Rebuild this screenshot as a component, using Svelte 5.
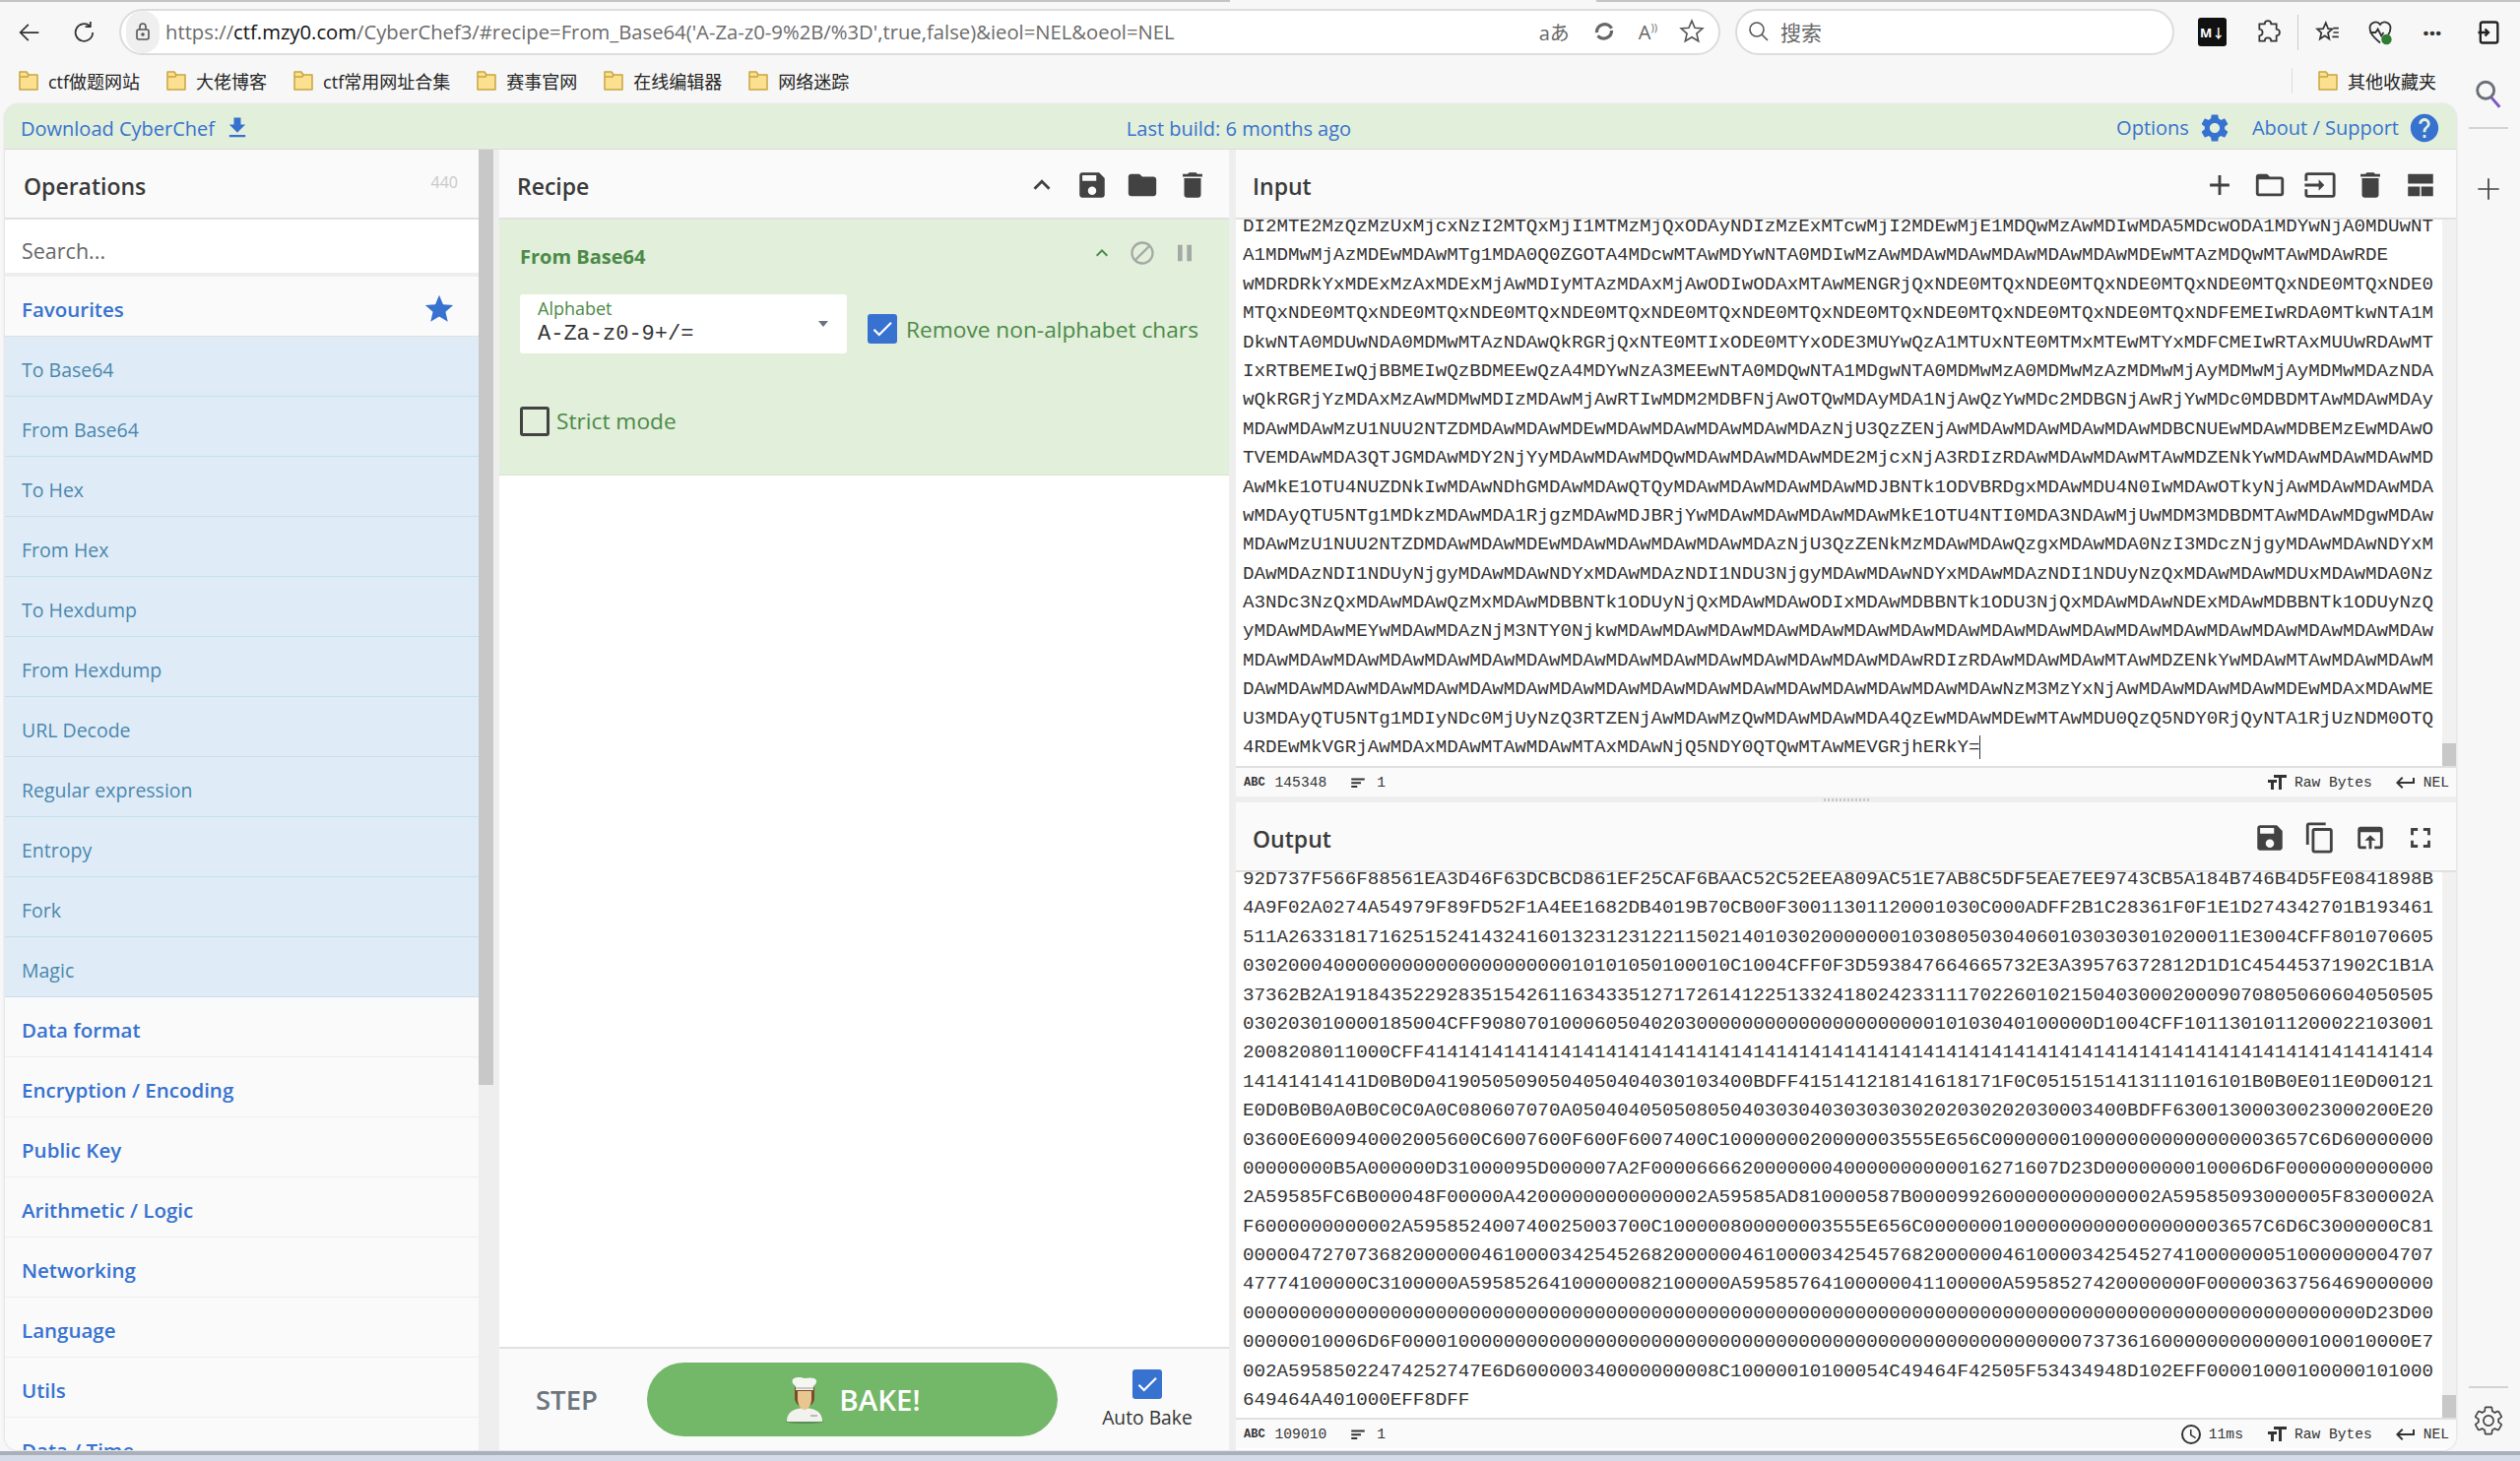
<script>
	const bookmarks = ["ctf做题网站", "大佬博客", "ctf常用网址合集", "赛事官网", "在线编辑器", "网络迷踪"];
	const favourites = ["To Base64", "From Base64", "To Hex", "From Hex", "To Hexdump", "From Hexdump", "URL Decode", "Regular expression", "Entropy", "Fork", "Magic"];
	const categories = ["Data format", "Encryption / Encoding", "Public Key", "Arithmetic / Logic", "Networking", "Language", "Utils", "Data / Time"];

	// the text area wraps at 105 characters, drop spare zeros from my transcription
	const fit = (line) => {
		while (line.length > 105) line = line.replace("000000", "00000");
		return line;
	};

	const input = [
		"DI2MTE2MzQzMzUxMjcxNzI2MTQxMjI1MTMzMjQxODAyNDIzMzExMTcwMjI2MDEwMjE1MDQwMzAwMDIwMDA5MDcwODA1MDYwNjA0MDUwNT",
		"A1MDMwMjAzMDEwMDAwMTg1MDA0Q0ZGOTA4MDcwMTAwMDYwNTA0MDIwMzAwMDAwMDAwMDAwMDAwMDAwMDEwMTAzMDQwMTAwMDAwRDE",
		"wMDRDRkYxMDExMzAxMDExMjAwMDIyMTAzMDAxMjAwODIwODAxMTAwMENGRjQxNDE0MTQxNDE0MTQxNDE0MTQxNDE0MTQxNDE0MTQxNDE0",
		"MTQxNDE0MTQxNDE0MTQxNDE0MTQxNDE0MTQxNDE0MTQxNDE0MTQxNDE0MTQxNDE0MTQxNDE0MTQxNDE0MTQxNDFEMEIwRDA0MTkwNTA1M",
		"DkwNTA0MDUwNDA0MDMwMTAzNDAwQkRGRjQxNTE0MTIxODE0MTYxODE3MUYwQzA1MTUxNTE0MTMxMTEwMTYxMDFCMEIwRTAxMUUwRDAwMT",
		"IxRTBEMEIwQjBBMEIwQzBDMEEwQzA4MDYwNzA3MEEwNTA0MDQwNTA1MDgwNTA0MDMwMzA0MDMwMzAzMDMwMjAyMDMwMjAyMDMwMDAzNDA",
		"wQkRGRjYzMDAxMzAwMDMwMDIzMDAwMjAwRTIwMDM2MDBFNjAwOTQwMDAyMDA1NjAwQzYwMDc2MDBGNjAwRjYwMDc0MDBDMTAwMDAwMDAy",
		"MDAwMDAwMzU1NUU2NTZDMDAwMDAwMDEwMDAwMDAwMDAwMDAwMDAzNjU3QzZENjAwMDAwMDAwMDAwMDAwMDBCNUEwMDAwMDBEMzEwMDAwO",
		"TVEMDAwMDA3QTJGMDAwMDY2NjYyMDAwMDAwMDQwMDAwMDAwMDAwMDE2MjcxNjA3RDIzRDAwMDAwMDAwMTAwMDZENkYwMDAwMDAwMDAwMD",
		"AwMkE1OTU4NUZDNkIwMDAwNDhGMDAwMDAwQTQyMDAwMDAwMDAwMDAwMDJBNTk1ODVBRDgxMDAwMDU4N0IwMDAwOTkyNjAwMDAwMDAwMDA",
		"wMDAyQTU5NTg1MDkzMDAwMDA1RjgzMDAwMDJBRjYwMDAwMDAwMDAwMDAwMkE1OTU4NTI0MDA3NDAwMjUwMDM3MDBDMTAwMDAwMDgwMDAw",
		"MDAwMzU1NUU2NTZDMDAwMDAwMDEwMDAwMDAwMDAwMDAwMDAzNjU3QzZENkMzMDAwMDAwQzgxMDAwMDA0NzI3MDczNjgyMDAwMDAwNDYxM",
		"DAwMDAzNDI1NDUyNjgyMDAwMDAwNDYxMDAwMDAzNDI1NDU3NjgyMDAwMDAwNDYxMDAwMDAzNDI1NDUyNzQxMDAwMDAwMDUxMDAwMDA0Nz",
		"A3NDc3NzQxMDAwMDAwQzMxMDAwMDBBNTk1ODUyNjQxMDAwMDAwODIxMDAwMDBBNTk1ODU3NjQxMDAwMDAwNDExMDAwMDBBNTk1ODUyNzQ",
		"yMDAwMDAwMEYwMDAwMDAzNjM3NTY0NjkwMDAwMDAwMDAwMDAwMDAwMDAwMDAwMDAwMDAwMDAwMDAwMDAwMDAwMDAwMDAwMDAwMDAwMDAw",
		"MDAwMDAwMDAwMDAwMDAwMDAwMDAwMDAwMDAwMDAwMDAwMDAwMDAwMDAwMDAwRDIzRDAwMDAwMDAwMTAwMDZENkYwMDAwMTAwMDAwMDAwM",
		"DAwMDAwMDAwMDAwMDAwMDAwMDAwMDAwMDAwMDAwMDAwMDAwMDAwMDAwMDAwMDAwMDAwNzM3MzYxNjAwMDAwMDAwMDAwMDEwMDAxMDAwME",
		"U3MDAyQTU5NTg1MDIyNDc0MjUyNzQ3RTZENjAwMDAwMzQwMDAwMDAwMDA4QzEwMDAwMDEwMTAwMDU0QzQ5NDY0RjQyNTA1RjUzNDM0OTQ",
		"4RDEwMkVGRjAwMDAxMDAwMTAwMDAwMTAxMDAwNjQ5NDY0QTQwMTAwMEVGRjhERkY="
	];
	const output = [
		"92D737F566F88561EA3D46F63DCBCD861EF25CAF6BAAC52C52EEA809AC51E7AB8C5DF5EAE7EE9743CB5A184B746B4D5FE0841898B",
		"4A9F02A0274A54979F89FD52F1A4EE1682DB4019B70CB00F30011301120001030C000ADFF2B1C28361F0F1E1D274342701B193461",
		"511A263318171625152414324160132312312211502140103020000000103080503040601030303010200011E3004CFF801070605",
		"0302000400000000000000000000010101050100010C1004CFF0F3D593847664665732E3A39576372812D1D1C45445371902C1B1A",
		"37362B2A1918435229283515426116343351271726141225133241802423311170226010215040300020009070805060604050505",
		"030203010000185004CFF9080701000605040203000000000000000000000010103040100000D1004CFF1011301011200022103001",
		"2008208011000CFF" + "41".repeat(44) + "4",
		"14141414141D0B0D04190505090504050404030103400BDFF415141218141618171F0C0515151413111016101B0B0E011E0D00121",
		"E0D0B0B0A0B0C0C0A0C080607070A0504040505080504030304030303030202030202030003400BDFF63001300030023000200E20",
		"03600E600940002005600C6007600F600F6007400C1000000020000003555E656C0000000100000000000000003657C6D60000000",
		"00000000B5A000000D31000095D000007A2F00006666200000004000000000001627160 7D23D0000000010006D6F0000000000000".replace(" ", ""),
		"2A59585FC6B000048F000000A42000000000000002A59585AD810000587B0000992600000000000002A59585093000005F8300002A",
		"F600000000000002A595852400740025003700C100000800000003555E656C000000010000000000000000003657C6D6C3000000C81",
		"000004727073682000000461000034254526820000004610000342545768200000046100003425452741000000051000000004707",
		"477741000000C3100000A59585264100000082100000A59585764100000041100000A5958527420000000F00000363756469000000",
		"000000000000000000000000000000000000000000000000000000000000000000000000000000000000000000000000000D23D00",
		"00000010006D6F00001000000000000000000000000000000000000000000000000000000073736160000000000000100010000E7",
		"002A59585022474252747E6D600000340000000008C10000010100054C49464F42505F53434948D102EFF00001000100000101000",
		"649464A401000EFF8DFF"
	].map(fit);

	const paths = {
		up: "M7.41 15.41L12 10.83l4.59 4.58L18 14l-6-6-6 6z",
		save: "M17 3H5c-1.11 0-2 .9-2 2v14c0 1.1.89 2 2 2h14c1.1 0 2-.9 2-2V7l-4-4zm-5 16c-1.66 0-3-1.34-3-3s1.34-3 3-3 3 1.34 3 3-1.34 3-3 3zm3-10H5V5h10v4z",
		folder: "M10 4H4c-1.1 0-1.99.9-1.99 2L2 18c0 1.1.9 2 2 2h16c1.1 0 2-.9 2-2V8c0-1.1-.9-2-2-2h-8l-2-2z",
		folderOpen: "M20 6h-8l-2-2H4c-1.1 0-1.99.9-1.99 2L2 18c0 1.1.9 2 2 2h16c1.1 0 2-.9 2-2V8c0-1.1-.9-2-2-2zm0 12H4V8h16v10z",
		trash: "M6 19c0 1.1.9 2 2 2h8c1.1 0 2-.9 2-2V7H6v12zM19 4h-3.5l-1-1h-5l-1 1H5v2h14V4z",
		add: "M19 13h-6v6h-2v-6H5v-2h6V5h2v6h6v2z",
		input: "M21 3.01H3c-1.1 0-2 .9-2 2V9h2V4.99h18v14.03H3V15H1v4.01c0 1.1.9 1.98 2 1.98h18c1.1 0 2-.88 2-1.98v-14c0-1.11-.9-2-2-2zM11 16l4-4-4-4v3H1v2h10v3z",
		split: "M3 4h18v7H3zM3 13h8.500v7H3zM12.500 13H21v7h-8.500z",
		copy: "M16 1H4c-1.1 0-2 .9-2 2v14h2V3h12V1zm3 4H8c-1.1 0-2 .9-2 2v14c0 1.1.9 2 2 2h11c1.1 0 2-.9 2-2V7c0-1.1-.9-2-2-2zm0 16H8V7h11v14z",
		openIn: "M19 4H5c-1.11 0-2 .9-2 2v12c0 1.1.89 2 2 2h4v-2H5V8h14v10h-4v2h4c1.1 0 2-.9 2-2V6c0-1.1-.89-2-2-2zm-7 6l-4 4h3v6h2v-6h3l-4-4z",
		fullscreen: "M7 14H5v5h5v-2H7v-3zm-2-4h2V7h3V5H5v5zm12 7h-3v2h5v-5h-2v3zM14 5v2h3v3h2V5h-5z",
		gear: "M19.14 12.94c.04-.3.06-.61.06-.94 0-.32-.02-.64-.07-.94l2.03-1.58c.18-.14.23-.41.12-.61l-1.92-3.32c-.12-.22-.37-.29-.59-.22l-2.39.96c-.5-.38-1.03-.7-1.62-.94l-.36-2.54c-.04-.24-.24-.41-.48-.41h-3.84c-.24 0-.43.17-.47.41l-.36 2.54c-.59.24-1.13.57-1.62.94l-2.39-.96c-.22-.08-.47 0-.59.22L2.74 8.87c-.12.21-.08.47.12.61l2.03 1.58c-.05.3-.09.63-.09.94s.02.64.07.94l-2.03 1.58c-.18.14-.23.41-.12.61l1.92 3.32c.12.22.37.29.59.22l2.39-.96c.5.38 1.03.7 1.62.94l.36 2.54c.05.24.24.41.48.41h3.84c.24 0 .44-.17.47-.41l.36-2.54c.59-.24 1.13-.56 1.62-.94l2.39.96c.22.08.47 0 .59-.22l1.92-3.32c.12-.22.07-.47-.12-.61l-2.01-1.58zM12 15.6c-1.98 0-3.6-1.62-3.6-3.6s1.62-3.6 3.6-3.6 3.6 1.62 3.6 3.6-1.62 3.6-3.6 3.6z",
		help: "M12 2C6.48 2 2 6.48 2 12s4.48 10 10 10 10-4.48 10-10S17.52 2 12 2zm1 17h-2v-2h2v2zm2.07-7.75l-.9.92C13.45 12.9 13 13.5 13 15h-2v-.5c0-1.1.45-2.1 1.17-2.83l1.24-1.26c.37-.36.59-.86.59-1.41 0-1.1-.9-2-2-2s-2 .9-2 2H8c0-2.21 1.79-4 4-4s4 1.79 4 4c0 .88-.36 1.68-.93 2.25z",
		download: "M19 9h-4V3H9v6H5l7 7 7-7zM5 18v2h14v-2H5z",
		star: "M12 17.27L18.18 21l-1.64-7.03L22 9.24l-7.19-.61L12 2 9.19 8.63 2 9.24l5.46 4.73L5.82 21z",
		block: "M12 2C6.48 2 2 6.48 2 12s4.48 10 10 10 10-4.48 10-10S17.52 2 12 2zM4 12c0-4.42 3.58-8 8-8 1.85 0 3.55.63 4.9 1.69L5.69 16.9C4.63 15.55 4 13.85 4 12zm8 8c-1.85 0-3.55-.63-4.9-1.69L18.31 7.1C19.37 8.45 20 10.15 20 12c0 4.42-3.58 8-8 8z",
		pause: "M6 19h4V5H6v14zm8-14v14h4V5h-4z",
		check: "M9 16.17L4.83 12l-1.42 1.41L9 19 21 7l-1.41-1.41z",
		caret: "M7 9l5 6 5-6z",
		clock: "M12 2a10 10 0 1 0 0 20 10 10 0 0 0 0-20zm0 18a8 8 0 1 1 0-16 8 8 0 0 1 0 16zm.5-13H11v6l5.250 3.150.750-1.230-4.500-2.670z",
		textSize: "M9 4v3h5v12h3V7h5V4H9zm-6 8h3v7h3v-7h3V9H3v3z",
		lines: "M3 6h18v2.500H3zM3 11h13v2.500H3zM3 16h8v2.500H3z",
		newline: "M19 7v4H5.830l3.580-3.590L8 6l-6 6 6 6 1.410-1.410L5.830 13H21V7z"
	};
</script>

{#snippet icon(name, size, color)}
	<svg width={size} height={size} viewBox="0 0 24 24" fill={color} aria-hidden="true"><path d={paths[name]} /></svg>
{/snippet}

{#snippet folderIcon()}
	<svg width="24" height="24" viewBox="0 0 24 24" aria-hidden="true">
		<path d="M3 3h7l2 3h9v15H3z" fill="#fbe08f" stroke="#c9a542" stroke-width="1.500" stroke-linejoin="round" />
		<path d="M3 8h8l1-2" fill="none" stroke="#c9a542" stroke-width="1.500" />
	</svg>
{/snippet}

{#snippet statusLeft(length)}
	<span class="abc">ABC</span>
	<span>{length}</span>
	<span class="lines">{@render icon("lines", 18, "#333")}</span>
	<span>1</span>
{/snippet}

{#snippet statusRight()}
	<span class="stat">{@render icon("textSize", 24, "#333")} Raw Bytes</span>
	<span class="stat">{@render icon("newline", 24, "#333")} NEL</span>
{/snippet}

<div class="page">
	<div class="tabstrip"><i></i><b></b><i></i></div>

	<div class="toolbar">
		<svg class="nav" width="28" height="28" viewBox="0 0 24 24" fill="none" stroke="#333" stroke-width="1.500"><path d="M20 12H4M11 5l-7 7 7 7" /></svg>
		<svg class="nav" width="28" height="28" viewBox="0 0 24 24" fill="none" stroke="#333" stroke-width="1.500"><path d="M19 12a7.500 7.500 0 1 1-2.500-5.600M17 2.500v4.500h-4.500" /></svg>
		<div class="address">
			<span class="lock">
				<svg width="18" height="20" viewBox="0 0 18 20" fill="none" stroke="#555" stroke-width="1.600"><rect x="3" y="8" width="12" height="10" rx="2" /><path d="M6 8V5a3 3 0 0 1 6 0v3" /><circle cx="9" cy="13" r="1" fill="#555" /></svg>
			</span>
			<span class="url">https://<em>ctf.mzy0.com</em>/CyberChef3/#recipe=From_Base64('A-Za-z0-9%2B/%3D',true,false)&amp;ieol=NEL&amp;oeol=NEL</span>
			<span class="addr-tools">
				<span class="aa">aあ</span>
				<svg width="26" height="26" viewBox="0 0 24 24" fill="none" stroke="#666" stroke-width="3"><path d="M5 13a7.500 7.500 0 0 1 14-4M19 11a7.500 7.500 0 0 1-13 5" /></svg>
				<span class="aa">A<sup>))</sup></span>
				<svg width="26" height="26" viewBox="0 0 24 24" fill="none" stroke="#555" stroke-width="1.500"><path d={paths.star} /></svg>
			</span>
		</div>
		<div class="searchbox">
			<svg width="24" height="24" viewBox="0 0 24 24" fill="none" stroke="#555" stroke-width="1.600"><circle cx="10" cy="10" r="7" /><path d="M15 15l6 6" /></svg>
			<span>搜索</span>
		</div>
		<div class="browser-tools">
			<span class="md">M↓</span>
			<svg width="26" height="26" viewBox="0 0 24 24" fill="none" stroke="#333" stroke-width="1.600"><path d="M9 4a3 3 0 0 1 6 0h5v5a3 3 0 0 1 0 6v5h-5a3 3 0 0 0-6 0H4v-5a3 3 0 0 0 0-6V4z" /></svg>
			<span class="vline"></span>
			<svg width="26" height="26" viewBox="0 0 24 24" fill="none" stroke="#333" stroke-width="1.600"><path d="M10 3l2.200 5.500 3.800.3-4 3.500 1.200 5.700L9 15l-4.500 3 1.300-5.700L2 8.800l5.500-.3zM17 8h5M17 12h5M16 16h6" /></svg>
			<svg class="heart" width="28" height="28" viewBox="0 0 24 24" fill="none" stroke="#333" stroke-width="1.600"><path d="M12 21C5 15 3 12 3 8a5 5 0 0 1 9-3 5 5 0 0 1 9 3c0 2-.5 4-2 6M3 12h5l2-3 3 6 2-3" /><circle cx="17.500" cy="18" r="4.500" fill="#2e7d32" stroke="none" /></svg>
			<span class="dots">···</span>
			<svg class="login" width="28" height="28" viewBox="0 0 24 24" fill="none" stroke="#222" stroke-width="2"><rect x="5" y="3" width="15" height="18" rx="2" /><path d="M3 12h9M9 9l3 3-3 3" /></svg>
		</div>
	</div>

	<div class="bookmarks">
		{#each bookmarks as b}
			<span class="bm">{@render folderIcon()}{b}</span>
		{/each}
		<span class="bm other">{@render folderIcon()}其他收藏夹</span>
	</div>

	<div class="main">
		<div class="app">
			<div class="banner">
				<span class="dl">Download CyberChef {@render icon("download", 28, "#3772d0")}</span>
				<span class="build">Last build: 6 months ago</span>
				<span class="links">
					<span>Options {@render icon("gear", 34, "#3772d0")}</span>
					<span>About / Support {@render icon("help", 34, "#3772d0")}</span>
				</span>
			</div>

			<div class="panes">
				<section class="ops">
					<div class="ops-col">
						<div class="title">Operations <small>440</small></div>
						<div class="search">Search...</div>
						<div class="list">
							<div class="cat fav">Favourites {@render icon("star", 34, "#3772d0")}</div>
							{#each favourites as f}
								<div class="op">{f}</div>
							{/each}
							{#each categories as c}
								<div class="cat">{c}</div>
							{/each}
						</div>
					</div>
					<div class="opscroll"><i></i></div>
				</section>

				<section class="recipe">
					<div class="title">
						Recipe
						<span class="tools">
							{@render icon("up", 34, "#424242")}
							{@render icon("save", 34, "#424242")}
							{@render icon("folder", 34, "#424242")}
							{@render icon("trash", 34, "#424242")}
						</span>
					</div>
					<div class="block">
						<div class="block-head">
							<strong>From Base64</strong>
							<span class="block-tools">
								{@render icon("up", 24, "#4b8a48")}
								{@render icon("block", 28, "#a5a9a5")}
								{@render icon("pause", 28, "#a5a9a5")}
							</span>
						</div>
						<div class="args">
							<div class="select">
								<label for="alpha">Alphabet</label>
								<div id="alpha" class="mono">A-Za-z0-9+/=</div>
								<span class="caret">{@render icon("caret", 24, "#6b7280")}</span>
							</div>
							<div class="check"><span class="box on">{@render icon("check", 26, "#fff")}</span>Remove non-alphabet chars</div>
						</div>
						<div class="check strict"><span class="box"></span>Strict mode</div>
					</div>
					<div class="blank"></div>
					<div class="controls">
						<span class="step">STEP</span>
						<button class="bake">
							<svg width="42" height="48" viewBox="0 0 42 48" aria-hidden="true">
								<ellipse cx="21" cy="46" rx="19" ry="2" fill="#5c8f55" />
								<path d="M3 46c0-9 5-13 18-14 13 1 18 5 18 14z" fill="#f1f2ee" />
								<path d="M11 11h20v11c0 5-4 9-10 9s-10-4-10-9z" fill="#7a4c2a" />
								<path d="M14 15h14v8c0 5-3 11-7 11s-7-6-7-11z" fill="#e9c68f" />
								<path d="M9 3c3-3 9-2 12-1 5-1 11-1 12 2s-3 6-3 6v4H12v-4S7 7 9 3z" fill="#f5f5f2" />
								<path d="M12 12h18" stroke="#c9c9c3" stroke-width="2" />
								<path d="M27 40h7" stroke="#bbb" stroke-width="2" />
							</svg>
							BAKE!
						</button>
						<div class="auto">
							<span class="box on">{@render icon("check", 26, "#fff")}</span>
							<span>Auto Bake</span>
						</div>
					</div>
				</section>

				<section class="io">
					<div class="title">
						Input
						<span class="tools wide">
							{@render icon("add", 34, "#424242")}
							{@render icon("folderOpen", 34, "#424242")}
							{@render icon("input", 34, "#424242")}
							{@render icon("trash", 34, "#424242")}
							{@render icon("split", 34, "#424242")}
						</span>
					</div>
					<div class="text input">
						<div class="lines-col mono">
							{#each input as line, i}
								<div class="line">{line}{#if i === input.length - 1}<i class="cursor"></i>{/if}</div>
							{/each}
						</div>
						<div class="scroll"><i></i></div>
					</div>
					<div class="status">
						<span class="left">{@render statusLeft(145348)}</span>
						<span class="right">{@render statusRight()}</span>
					</div>
					<div class="divider"><i></i></div>
					<div class="title">
						Output
						<span class="tools wide">
							{@render icon("save", 34, "#424242")}
							{@render icon("copy", 34, "#424242")}
							{@render icon("openIn", 34, "#424242")}
							{@render icon("fullscreen", 34, "#424242")}
						</span>
					</div>
					<div class="text output">
						<div class="lines-col mono">
							{#each output as line}
								<div class="line">{line}</div>
							{/each}
						</div>
						<div class="scroll"><i></i></div>
					</div>
					<div class="status">
						<span class="left">{@render statusLeft(109010)}</span>
						<span class="right">
							<span class="stat">{@render icon("clock", 24, "#333")} 11ms</span>
							{@render statusRight()}
						</span>
					</div>
				</section>
			</div>
		</div>

		<aside class="sidebar">
			<svg class="s1" width="34" height="34" viewBox="0 0 24 24" fill="none" stroke="#6a6f78" stroke-width="2"><circle cx="10" cy="9" r="6" /><path d="M14 14l6 7" stroke="#7a55c8" /></svg>
			<span class="rule"></span>
			<svg width="32" height="32" viewBox="0 0 24 24" fill="none" stroke="#444" stroke-width="1.300"><path d="M12 4v16M4 12h16" /></svg>
			<span class="spring"></span>
			<span class="rule"></span>
			<svg width="34" height="34" viewBox="0 0 24 24" fill="none" stroke="#444" stroke-width="1.200"><path d={paths.gear} /></svg>
		</aside>
	</div>

	<div class="bottom"></div>
</div>

<style>
	:global(body) {
		margin: 0;
		background: #f7f7f7;
	}
	.page {
		width: 2559px;
		height: 1484px;
		display: flex;
		flex-direction: column;
		overflow: hidden;
		font-family: "Open Sans", "Noto Sans CJK SC", sans-serif;
		color: #333;
	}
	svg {
		flex: none;
		display: block;
	}
	.mono {
		font-family: "Liberation Mono", monospace;
	}

	.tabstrip {
		display: flex;
		height: 2px;
		flex: none;
	}
	.tabstrip i {
		flex: 1249;
		background: #c4c4c4;
	}
	.tabstrip b {
		flex: 372;
	}
	.tabstrip i:last-child {
		flex: 938;
	}

	.toolbar {
		height: 61px;
		flex: none;
		display: flex;
		align-items: center;
		padding: 0 0 0 16px;
		box-sizing: border-box;
	}
	.nav {
		margin-right: 28px;
	}
	.nav + .nav {
		margin-right: 21px;
	}
	.address,
	.searchbox {
		height: 47px;
		box-sizing: border-box;
		background: #fff;
		border: 2px solid #dcdcdc;
		border-radius: 24px;
		display: flex;
		align-items: center;
		margin-top: -1px;
	}
	.address {
		width: 1626px;
		font-size: 20.250px;
		color: #6b6b6b;
	}
	.lock {
		width: 34px;
		height: 43px;
		border-radius: 17px;
		background: #efefef;
		display: flex;
		align-items: center;
		justify-content: center;
		margin: 0 6px 0 5px;
	}
	.url {
		white-space: nowrap;
	}
	.url em {
		font-style: normal;
		color: #111;
	}
	.addr-tools {
		margin-left: auto;
		display: flex;
		align-items: center;
		gap: 22px;
		padding-right: 14px;
		color: #666;
	}
	.aa {
		font-size: 20px;
	}
	.aa sup {
		font-size: 11px;
	}
	.searchbox {
		width: 446px;
		margin-left: 15px;
		gap: 10px;
		padding-left: 10px;
		font-size: 21px;
		color: #666;
	}
	.browser-tools {
		margin-left: 24px;
		display: flex;
		align-items: center;
		gap: 29px;
	}
	.md {
		background: #111;
		color: #fff;
		font-size: 13px;
		font-weight: 700;
		padding: 5px 2px;
		border-radius: 3px;
	}
	.vline {
		width: 1px;
		height: 36px;
		background: #ccc;
		margin: 0 -12px;
	}
	.heart {
		margin-left: -3px;
	}
	.dots {
		font-weight: 800;
		font-size: 22px;
		line-height: 1;
		color: #333;
	}
	.login {
		margin-left: 5px;
	}

	.bookmarks {
		height: 43px;
		flex: none;
		box-sizing: border-box;
		display: flex;
		align-items: center;
		gap: 25px;
		padding: 0 85px 5px 17px;
		font-size: 18px;
		color: #222;
	}
	.bm {
		display: flex;
		align-items: center;
		gap: 8px;
		white-space: nowrap;
	}
	.other {
		margin-left: auto;
		padding-left: 24px;
		border-left: 1px solid #ddd;
	}

	.main {
		flex: 1;
		min-height: 0;
		display: flex;
		padding-left: 5px;
	}
	.app {
		width: 2489px;
		display: flex;
		flex-direction: column;
		border-radius: 14px;
		overflow: hidden;
		background: #eee;
		box-shadow: 0 0 3px #c8c8c8;
	}
	.banner {
		height: 42px;
		flex: none;
		display: grid;
		grid-template-columns: 1fr 1fr 1fr;
		align-items: center;
		background: #e2efda;
		border-bottom: 1px solid #dbdbdb;
		color: #3772d0;
		font-size: 20px;
		padding: 3px 15px 0 16px;
	}
	.dl,
	.links span {
		display: flex;
		align-items: center;
		gap: 9px;
	}
	.build {
		text-align: center;
		margin-left: 16px;
	}
	.links {
		display: flex;
		justify-content: flex-end;
		gap: 21px;
		margin-top: -1px;
	}

	.panes {
		flex: 1;
		min-height: 0;
		display: flex;
		gap: 6px;
	}
	section {
		display: flex;
		flex-direction: column;
		background: #fff;
		min-height: 0;
		overflow: hidden;
	}
	.title {
		height: 71px;
		flex: none;
		box-sizing: border-box;
		background: #fafafa;
		border-bottom: 2px solid #e0e0e0;
		display: flex;
		align-items: center;
		justify-content: space-between;
		padding: 5px 18px 0;
		font-size: 23px;
		font-weight: 600;
		color: #3a3a3a;
	}
	.ops .title {
		padding-left: 19px;
	}
	.title small {
		font-size: 16px;
		font-weight: 400;
		color: #c9c9c9;
		margin: -9px 3px 0 0;
	}
	.tools {
		display: flex;
		align-items: center;
		gap: 17px;
		margin-top: -3px;
	}
	.recipe .tools {
		margin-right: 2px;
	}

	.ops {
		width: 496px;
		flex-direction: row;
	}
	.ops-col {
		width: 481px;
		display: flex;
		flex-direction: column;
		overflow: hidden;
	}
	.search {
		height: 58px;
		flex: none;
		box-sizing: border-box;
		display: flex;
		align-items: center;
		padding: 8px 0 0 17px;
		font-size: 21.500px;
		color: #666;
		border-bottom: 4px solid #eee;
	}
	.list {
		overflow: hidden;
		flex: 1;
		background: #fafafa;
	}
	.op,
	.cat {
		height: 61px;
		box-sizing: border-box;
		display: flex;
		align-items: center;
		justify-content: space-between;
		padding: 6px 23px 0 17px;
	}
	.op {
		background: #dfecf7;
		color: #4a87ae;
		border-bottom: 1px solid #c5e0ec;
		font-size: 19.500px;
	}
	.cat {
		color: #3772d0;
		font-weight: 600;
		border-bottom: 1px solid #eee;
		font-size: 20.500px;
	}
	.fav {
		border-bottom-color: #e0e0e0;
	}
	.opscroll {
		width: 15px;
		background: #eee;
	}
	.opscroll i {
		display: block;
		height: 950px;
		background: #c8c8c8;
	}

	.recipe {
		width: 741px;
	}
	.block {
		height: 260px;
		flex: none;
		box-sizing: border-box;
		background: #e2efda;
		border-bottom: 1px solid #d6e5c9;
		padding: 0 21px;
		color: #4b8a48;
		font-size: 22.700px;
	}
	.block-head {
		display: flex;
		align-items: center;
		justify-content: space-between;
		height: 74px;
	}
	.block-head strong {
		font-size: 20px;
		font-weight: 700;
	}
	.block-tools {
		display: flex;
		align-items: center;
		gap: 15px;
		margin: -6px 10px 0 0;
	}
	.args {
		display: flex;
		align-items: center;
		gap: 21px;
		height: 60px;
		margin-top: 2px;
	}
	.args .check {
		margin-top: 10px;
	}
	.select {
		width: 332px;
		height: 60px;
		flex: none;
		box-sizing: border-box;
		background: #fff;
		border-radius: 3px;
		padding: 4px 18px;
		position: relative;
	}
	.select label {
		display: block;
		font-size: 18px;
		line-height: 21px;
	}
	.select .mono {
		font-size: 22px;
		line-height: 31px;
		color: #333;
	}
	.caret {
		position: absolute;
		right: 12px;
		top: 18px;
	}
	.check {
		display: flex;
		align-items: center;
		gap: 9px;
		white-space: nowrap;
	}
	.strict {
		margin-top: 53px;
		gap: 7px;
	}
	.box {
		width: 30px;
		height: 30px;
		box-sizing: border-box;
		border: 3px solid #424242;
		border-radius: 3px;
		display: flex;
		align-items: center;
		justify-content: center;
		flex: none;
	}
	.box.on {
		background: #3772d0;
		border: none;
	}
	.blank {
		flex: 1;
	}
	.controls {
		height: 105px;
		flex: none;
		box-sizing: border-box;
		background: #fafafa;
		border-top: 2px solid #e0e0e0;
		display: flex;
		align-items: center;
		padding-left: 37px;
	}
	.step {
		font-size: 27.500px;
		font-weight: 600;
		color: #6c757d;
	}
	.bake {
		width: 417px;
		height: 75px;
		flex: none;
		margin-left: 50px;
		border: none;
		border-radius: 38px;
		background: #73b768;
		color: #fff;
		font: 600 29.500px "Open Sans", sans-serif;
		display: flex;
		align-items: center;
		justify-content: center;
		gap: 14px;
		padding: 0;
	}
	.auto {
		flex: 1;
		display: flex;
		flex-direction: column;
		align-items: center;
		gap: 5px;
		font-size: 19.300px;
		color: #333;
		margin-top: 1px;
		padding-left: 8px;
	}

	.io {
		width: 1239px;
		flex: none;
		margin-left: 1px;
	}
	.io .title {
		padding-left: 17px;
	}
	.io .tools {
		margin-right: 1px;
	}
	.text {
		display: flex;
		min-height: 0;
		overflow: hidden;
	}
	.input {
		height: 555px;
		flex: none;
	}
	.output {
		height: 554px;
		flex: none;
	}
	.lines-col {
		flex: 1;
		min-width: 0;
		padding: 0 7px;
		overflow: hidden;
		font-size: 19.200px;
		line-height: 29.400px;
		color: #333;
		margin-top: -7px;
	}
	.line {
		white-space: pre;
		overflow: hidden;
		height: 29.400px;
	}
	.cursor {
		display: inline-block;
		width: 1px;
		height: 24px;
		background: #333;
		vertical-align: middle;
	}
	.scroll {
		width: 14px;
		flex: none;
		background: #f1f1f1;
		display: flex;
		align-items: flex-end;
	}
	.scroll i {
		display: block;
		width: 100%;
		height: 23px;
		background: #c8c8c8;
	}
	.status {
		height: 31px;
		flex: none;
		box-sizing: border-box;
		background: #fafafa;
		border-top: 2px solid #e0e0e0;
		display: flex;
		align-items: center;
		justify-content: space-between;
		padding: 0 7px 0 8px;
		font: 14.600px "Liberation Mono", monospace;
		color: #333;
	}
	.left,
	.right,
	.stat {
		display: flex;
		align-items: center;
	}
	.left {
		gap: 10px;
	}
	.abc {
		font-weight: 700;
		font-size: 12px;
	}
	.lines {
		margin-left: 13px;
	}
	.right {
		gap: 22px;
	}
	.stat {
		gap: 6px;
	}
	.divider {
		height: 6px;
		flex: none;
		background: #eee;
		display: flex;
		align-items: center;
		justify-content: center;
	}
	.divider i {
		width: 46px;
		height: 3px;
		background: repeating-linear-gradient(90deg, #c8c8c8 0 2px, transparent 2px 4px);
	}

	.sidebar {
		width: 65px;
		flex: none;
		display: flex;
		flex-direction: column;
		align-items: center;
		padding: 0 0 13px;
		margin-top: -43px;
		box-sizing: border-box;
	}
	.s1 {
		margin-top: 16px;
	}
	.rule {
		width: 40px;
		height: 2px;
		background: #d4d4d4;
		margin: 16px 0 45px;
	}
	.spring {
		flex: 1;
	}
	.sidebar .spring + .rule {
		margin: 0 0 16px;
	}
	.bottom {
		height: 10px;
		flex: none;
		background: linear-gradient(#aab0ba 0 4px, #d5dbe8 4px);
		margin-top: 1px;
	}
</style>
